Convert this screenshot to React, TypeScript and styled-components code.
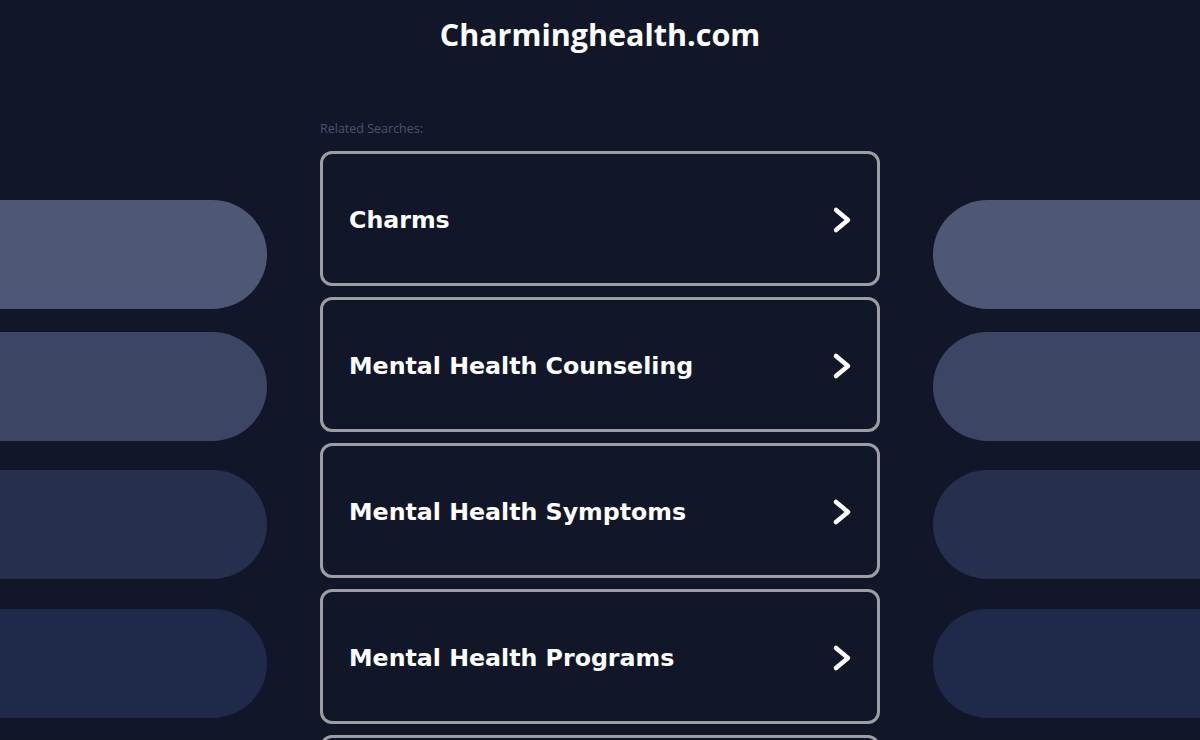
import styled, { createGlobalStyle } from 'styled-components';

const GlobalStyle = createGlobalStyle`
    html, body {
        margin: 0;
        padding: 0;
        background: #111729;
    }
    body {
        font-family: "Liberation Sans", Arial, sans-serif;
        overflow: hidden;
    }
`;

const searches = [
    'Charms',
    'Mental Health Counseling',
    'Mental Health Symptoms',
    'Mental Health Programs',
    'Mental Health Services',
];

const pills = [
    { color: '#4e5774', gap: 0 },
    { color: '#3c4563', gap: 23 },
    { color: '#272f4e', gap: 29 },
    { color: '#1f2a4b', gap: 30 },
];

const Chevron = () => (
    <svg width="24" height="32" viewBox="0 0 24 32">
        <polyline
            points="6,6 18,16 6,26"
            fill="none"
            stroke="#ffffff"
            strokeWidth="4.5"
            strokeLinecap="round"
            strokeLinejoin="round"
        />
    </svg>
);

const App = () => {
    return (
        <Page>
            <GlobalStyle />
            <Side side="left">
                {pills.map(p => (
                    <Pill key={p.color} side="left" color={p.color} gap={p.gap} />
                ))}
            </Side>
            <Center>
                <Title>Charminghealth.com</Title>
                <Related>Related Searches:</Related>
                <List>
                    {searches.map(s => (
                        <Card key={s} href="#">
                            <span>{s}</span>
                            <Chevron />
                        </Card>
                    ))}
                </List>
            </Center>
            <Side side="right">
                {pills.map(p => (
                    <Pill key={p.color} side="right" color={p.color} gap={p.gap} />
                ))}
            </Side>
        </Page>
    );
};
export default App;

const Page = styled.div`
    display: grid;
    grid-template-columns: 267px 1fr 267px;
    width: 1200px;
    min-height: 740px;
    background: #111729;
`;

const Side = styled.div<{ side: 'left' | 'right' }>`
    display: flex;
    flex-direction: column;
    padding-top: 200px;
    align-items: ${props => (props.side === 'left' ? 'flex-start' : 'flex-end')};
`;

const Pill = styled.div<{ side: 'left' | 'right'; color: string; gap: number }>`
    width: 267px;
    height: 109px;
    margin-top: ${props => props.gap}px;
    background: ${props => props.color};
    border-radius: ${props => (props.side === 'left' ? '0 55px 55px 0' : '55px 0 0 55px')};
`;

const Center = styled.div`
    display: flex;
    flex-direction: column;
    align-items: center;
`;

const Title = styled.h1`
    margin: 0;
    padding-top: 16px;
    height: 52px;
    font-family: "Open Sans", sans-serif;
    font-size: 30.5px;
    font-weight: 700;
    color: #ffffff;
    line-height: 36px;
`;

const Related = styled.div`
    width: 560px;
    margin-top: 53px;
    font-family: "Open Sans", sans-serif;
    font-size: 12.5px;
    color: #4a5174;
    line-height: 16px;
`;

const List = styled.div`
    display: flex;
    flex-direction: column;
    gap: 11px;
    margin-top: 14px;
`;

const Card = styled.a`
    box-sizing: border-box;
    display: flex;
    align-items: center;
    justify-content: space-between;
    width: 560px;
    height: 135px;
    padding: 2px 23px 0 26px;
    border: 3px solid #9c9ea4;
    border-radius: 12px;
    background: #111729;
    color: #ffffff;
    text-decoration: none;
    font-family: "DejaVu Sans", Verdana, sans-serif;
    font-size: 23.7px;
    font-weight: 700;
`;
